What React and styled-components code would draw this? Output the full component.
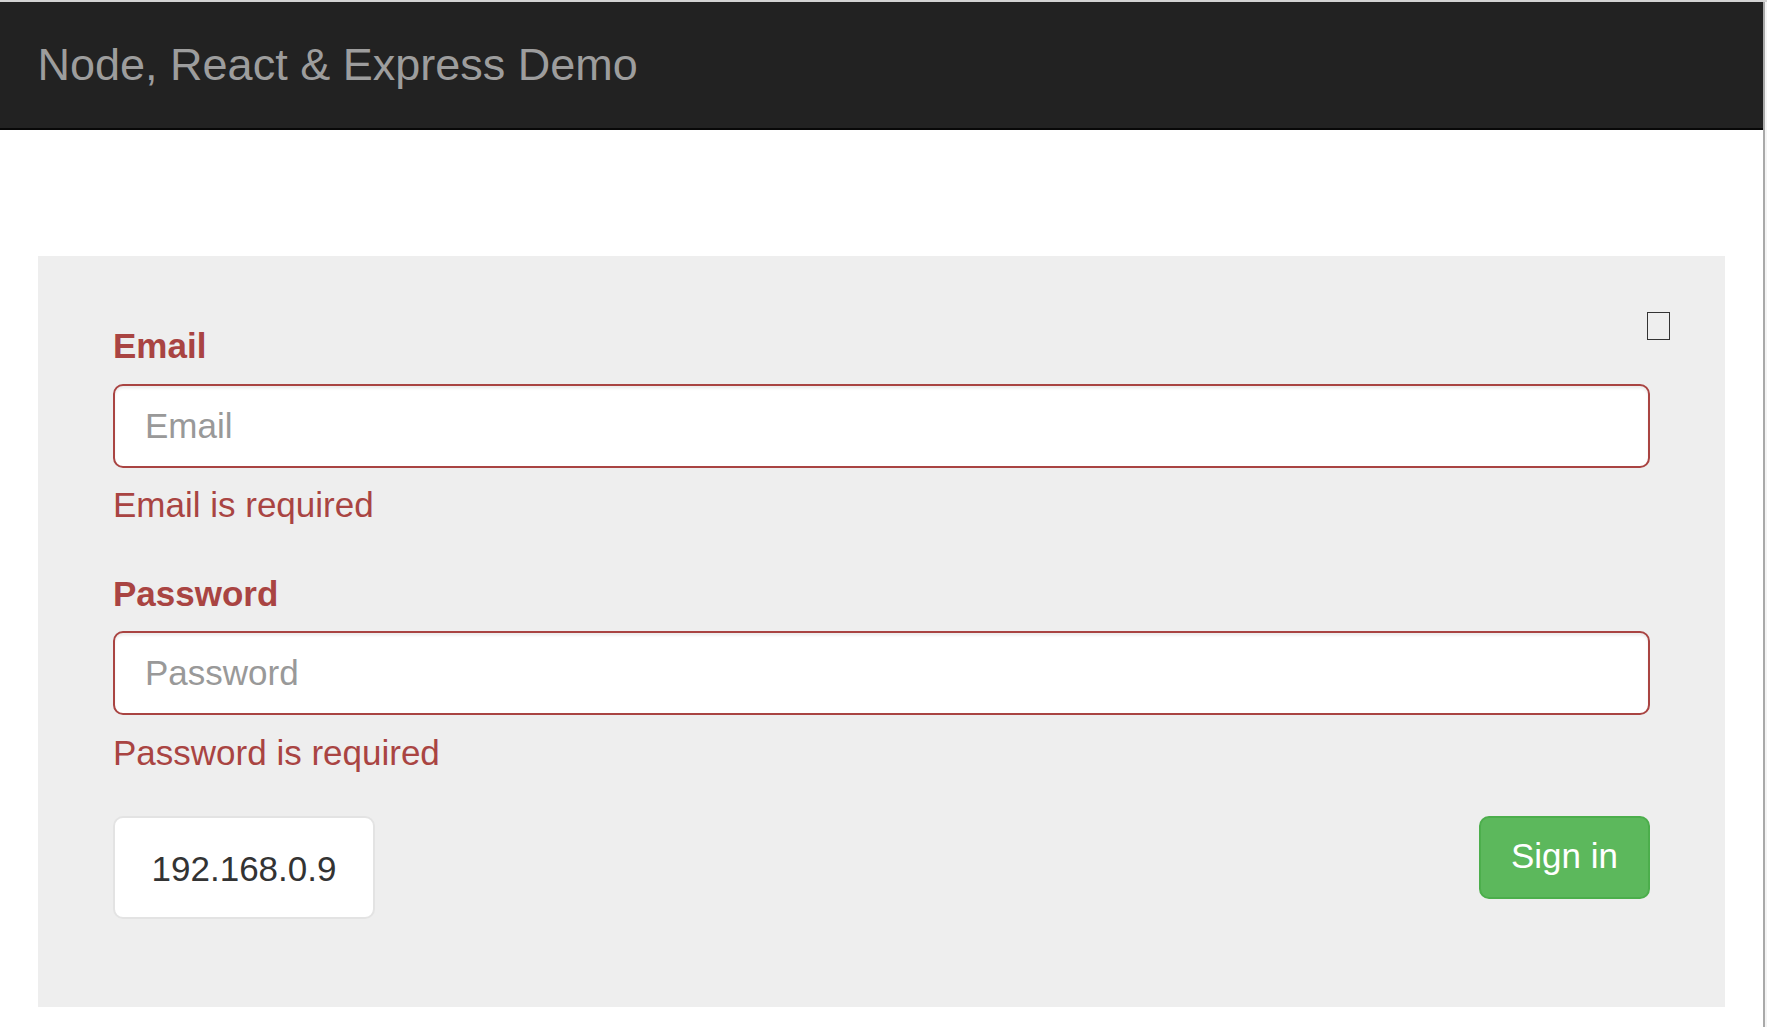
import React from 'react';
import styled, { createGlobalStyle } from 'styled-components';

const GlobalStyle = createGlobalStyle`
  html, body {
    margin: 0;
    padding: 0;
    background: #fff;
  }
  body {
    font-family: "Liberation Sans", Arial, Helvetica, sans-serif;
    color: #333;
  }
  * {
    box-sizing: border-box;
  }
`;

const Page = styled.div`
  display: flex;
  min-height: 100vh;
  border-top: 2px solid #d3d3d3;
`;

const Main = styled.div`
  flex: 1;
  min-width: 0;
`;

const WindowEdge = styled.div`
  width: 4px;
  border-left: 2px solid #a9a9a9;
  background: #f4f4f4;
`;

const Navbar = styled.nav`
  height: 127.5px;
  background: #222;
  border-bottom: 2.5px solid #080808;
`;

const Brand = styled.div`
  padding: 37.5px 37.5px;
  font-size: 45px;
  line-height: 50px;
  color: #9d9d9d;
`;

const Content = styled.div`
  padding: 126px 38px 0;
`;

const Jumbotron = styled.div`
  position: relative;
  background: #eee;
  padding: 65.5px 75px 88px;
`;

const CornerCheck = styled.input.attrs({ type: 'checkbox' })`
  position: absolute;
  top: 56px;
  right: 55px;
  width: 23px;
  height: 28px;
  margin: 0;
  appearance: none;
  background: #eee;
  border: 1.5px solid #333;
`;

const FormGroup = styled.div`
  margin-bottom: 38.5px;
`;

const Label = styled.label`
  display: block;
  margin-bottom: 12.5px;
  font-size: 35px;
  line-height: 50px;
  font-weight: bold;
  color: #a94442;
`;

const Input = styled.input`
  display: block;
  width: 100%;
  height: 84px;
  padding: 15px 30px;
  font-family: inherit;
  font-size: 35px;
  line-height: 50px;
  color: #555;
  background: #fff;
  border: 2.5px solid #a94442;
  border-radius: 10px;
  box-shadow: inset 0 2.5px 2.5px rgba(0, 0, 0, 0.075);
  outline: none;

  &::placeholder {
    color: #999;
  }
`;

const HelpBlock = styled.span`
  display: block;
  margin-top: 12.5px;
  font-size: 35px;
  line-height: 50px;
  color: #a94442;
`;

const Footer = styled.div`
  display: flex;
  justify-content: space-between;
  align-items: flex-start;
`;

const Well = styled.div`
  width: 262px;
  height: 103px;
  display: flex;
  align-items: center;
  justify-content: center;
  background: #fff;
  border: 2.5px solid #e3e3e3;
  border-radius: 10px;
  font-size: 35px;
  color: #333;
  padding-top: 2px;
`;

const Button = styled.button`
  width: 171px;
  height: 83px;
  font-family: inherit;
  font-size: 35px;
  line-height: 50px;
  color: #fff;
  background: #5cb85c;
  border: 2.5px solid #4cae4c;
  border-radius: 10px;
  cursor: pointer;
  padding: 0 0 4px;
`;

const App = () => {
  return (
    <>
      <GlobalStyle />
      <Page>
        <Main>
          <Navbar>
            <Brand>Node, React &amp; Express Demo</Brand>
          </Navbar>
          <Content>
            <Jumbotron>
              <CornerCheck />
              <FormGroup>
                <Label htmlFor="email">Email</Label>
                <Input id="email" type="email" placeholder="Email" />
                <HelpBlock>Email is required</HelpBlock>
              </FormGroup>
              <FormGroup>
                <Label htmlFor="password">Password</Label>
                <Input id="password" type="password" placeholder="Password" />
                <HelpBlock>Password is required</HelpBlock>
              </FormGroup>
              <Footer>
                <Well>192.168.0.9</Well>
                <Button type="submit">Sign in</Button>
              </Footer>
            </Jumbotron>
          </Content>
        </Main>
        <WindowEdge />
      </Page>
    </>
  );
};

export default App;
